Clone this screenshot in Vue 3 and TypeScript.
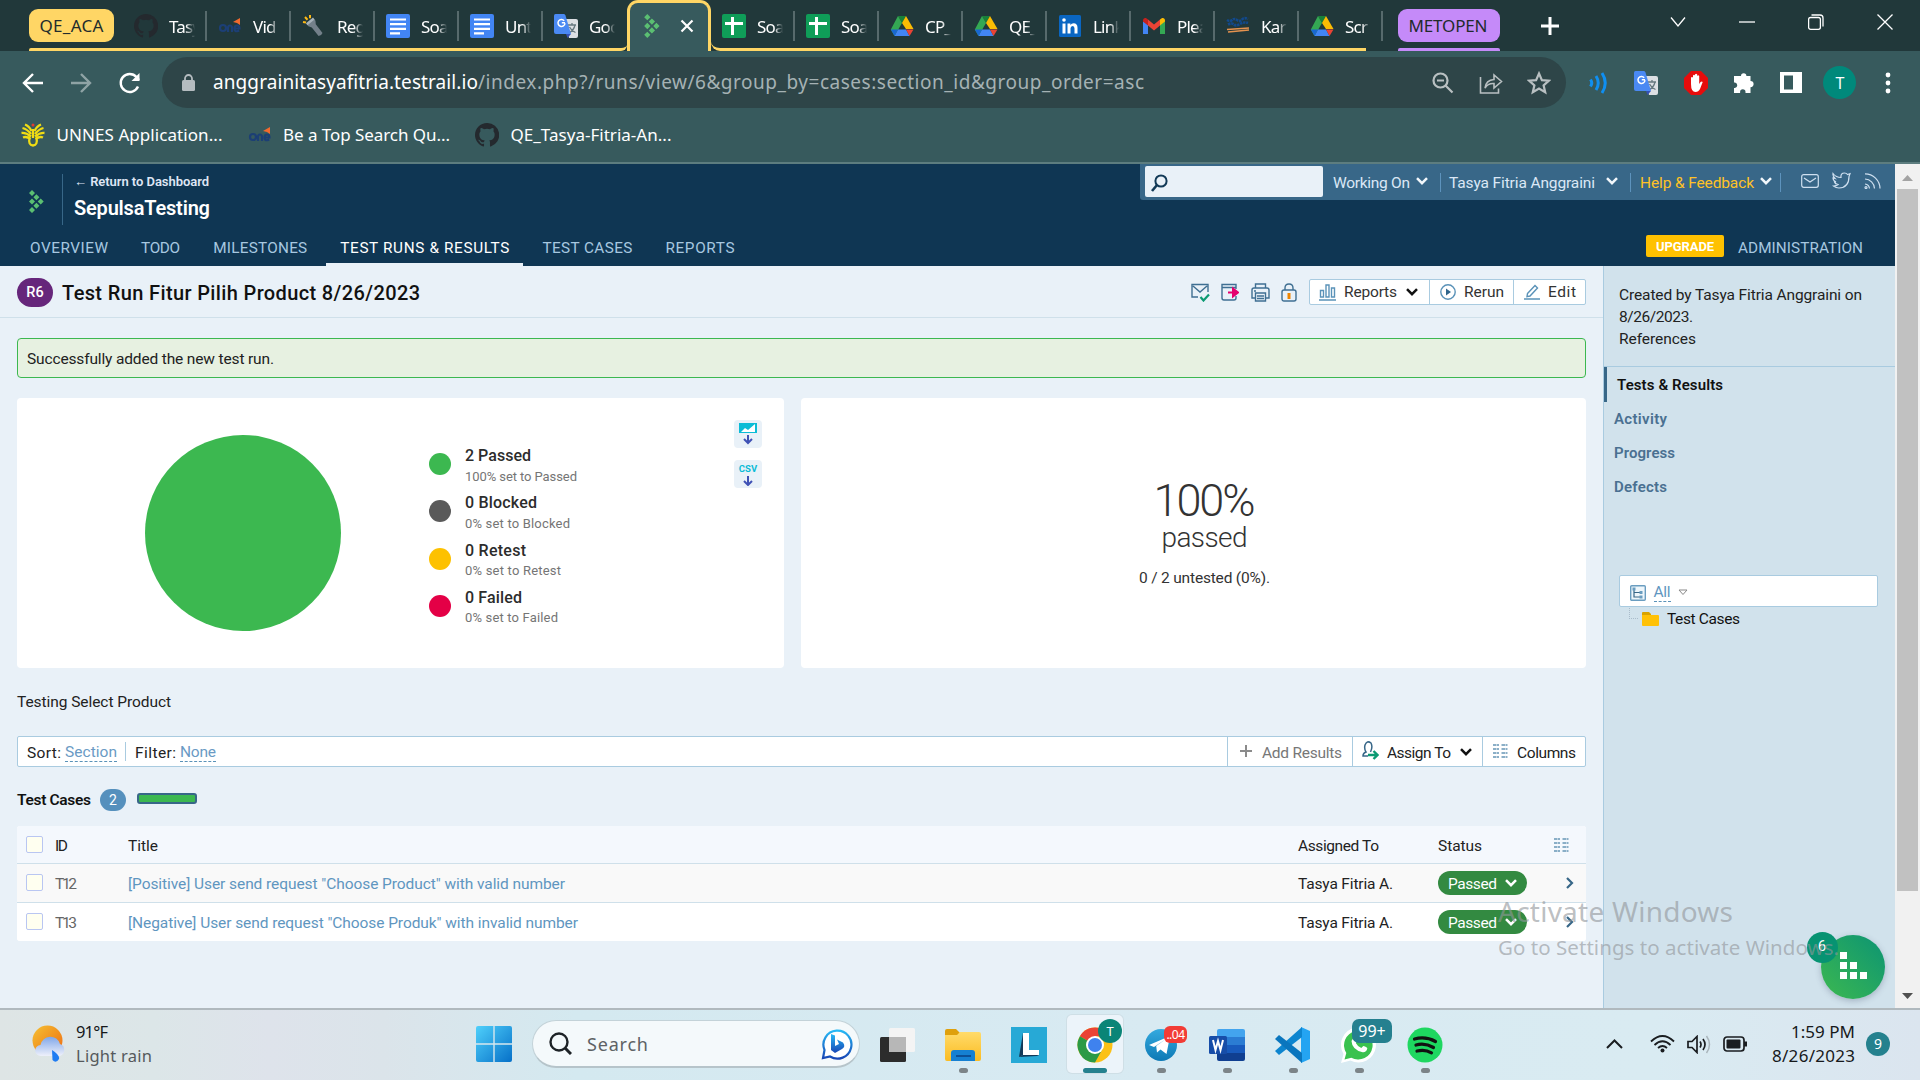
<script setup lang="ts">
import type { Directive } from 'vue'

interface Tab { icon: string; label: string }
interface LegendItem { color: string; title: string; titleWidth: number; sub: string; subWidth: number }
interface TestRow { id: string; title: string; width: number }
interface NavItem { label: string; width: number; active?: boolean }
interface TaskApp { icon: string; running: boolean; active?: boolean }

/* Tracks a label out (or in) so that it fills the given width. */
const vFit: Directive<HTMLElement, number> = {
  mounted(el, { value }) {
    el.style.display = 'inline-block'
    el.style.whiteSpace = 'nowrap'
    const range = document.createRange()
    range.selectNodeContents(el)
    const natural = range.getBoundingClientRect().width
    const count = Math.max((el.textContent ?? '').length - 1, 1)
    el.style.letterSpacing = `${(value - natural) / count}px`
    el.style.width = `${value}px`
  },
}

const tabsBefore: Tab[] = [
  { icon: 'github', label: 'Tasy' },
  { icon: 'one', label: 'Vid' },
  { icon: 'torch', label: 'Reg' },
  { icon: 'docs', label: 'Soa' },
  { icon: 'docs', label: 'Unt' },
  { icon: 'translate', label: 'Goo' },
]
const tabsAfter: Tab[] = [
  { icon: 'sheets', label: 'Soa' },
  { icon: 'sheets', label: 'Soa' },
  { icon: 'drive', label: 'CP_' },
  { icon: 'drive', label: 'QE_' },
  { icon: 'linkedin', label: 'Link' },
  { icon: 'gmail', label: 'Plea' },
  { icon: 'kampus', label: 'Kar' },
  { icon: 'drive', label: 'Scr' },
]
const nav: NavItem[] = [
  { label: 'OVERVIEW', width: 78 },
  { label: 'TODO', width: 39 },
  { label: 'MILESTONES', width: 94 },
  { label: 'TEST RUNS & RESULTS', width: 169, active: true },
  { label: 'TEST CASES', width: 90 },
  { label: 'REPORTS', width: 69 },
]
const legend: LegendItem[] = [
  { color: '#3cb850', title: '2 Passed', titleWidth: 66, sub: '100% set to Passed', subWidth: 112 },
  { color: '#5a5a5a', title: '0 Blocked', titleWidth: 72, sub: '0% set to Blocked', subWidth: 105 },
  { color: '#fdc100', title: '0 Retest', titleWidth: 61, sub: '0% set to Retest', subWidth: 96 },
  { color: '#e40046', title: '0 Failed', titleWidth: 57, sub: '0% set to Failed', subWidth: 93 },
]
const rows: TestRow[] = [
  { id: 'T12', title: '[Positive] User send request "Choose Product" with valid number', width: 437 },
  { id: 'T13', title: '[Negative] User send request "Choose Produk" with invalid number', width: 450 },
]
const apps: TaskApp[] = [
  { icon: 'taskview', running: false },
  { icon: 'explorer', running: true },
  { icon: 'lapp', running: false },
  { icon: 'chrome', running: true, active: true },
  { icon: 'telegram', running: true },
  { icon: 'word', running: true },
  { icon: 'vscode', running: true },
  { icon: 'whatsapp', running: true },
  { icon: 'spotify', running: true },
]
</script>

<template>
  <div class="screen">
    <svg class="defs" aria-hidden="true">
      <defs>
        <linearGradient id="g-win" x1="0" y1="0" x2="1" y2="1"><stop offset="0" stop-color="#4fd0fb" /><stop offset="1" stop-color="#0670c8" /></linearGradient>
        <linearGradient id="g-sun" x1="0" y1="0" x2="1" y2="1"><stop offset="0" stop-color="#f5c132" /><stop offset="1" stop-color="#ee6a12" /></linearGradient>
        <linearGradient id="g-cloud" x1="0" y1="0" x2="0" y2="1"><stop offset="0" stop-color="#7fa6e8" /><stop offset="1" stop-color="#eef0fb" /></linearGradient>
        <linearGradient id="g-fold" x1="0" y1="0" x2="0" y2="1"><stop offset="0" stop-color="#ffdb6b" /><stop offset="1" stop-color="#fbbc22" /></linearGradient>
        <linearGradient id="g-tg" x1="0" y1="0" x2="0" y2="1"><stop offset="0" stop-color="#34aadf" /><stop offset="1" stop-color="#0d79b5" /></linearGradient>
        <linearGradient id="g-bing" x1="0" y1="0" x2="0" y2="1"><stop offset="0" stop-color="#28b9f5" /><stop offset="1" stop-color="#1746b5" /></linearGradient>
      </defs>
      <symbol id="i-github" viewBox="0 0 16 16"><path fill="#24292e" d="M8 0C3.58 0 0 3.58 0 8c0 3.54 2.29 6.53 5.47 7.59.4.07.55-.17.55-.38v-1.33c-2.23.48-2.7-1.07-2.7-1.07-.36-.93-.89-1.18-.89-1.18-.73-.5.05-.49.05-.49.8.06 1.23.83 1.23.83.71 1.23 1.87.87 2.33.67.07-.52.28-.87.5-1.07-1.77-.2-3.64-.89-3.64-3.95 0-.87.31-1.59.82-2.15-.08-.2-.36-1.02.08-2.12 0 0 .67-.21 2.2.82a7.6 7.6 0 0 1 4 0c1.53-1.04 2.2-.82 2.2-.82.44 1.1.16 1.92.08 2.12.51.56.82 1.27.82 2.15 0 3.07-1.87 3.75-3.65 3.95.29.25.54.73.54 1.48v2.2c0 .21.15.46.55.38A8 8 0 0 0 8 0z" /></symbol>
      <symbol id="i-one" viewBox="0 0 24 24"><g fill="none" stroke="#1c3f75" stroke-width="2.2"><circle cx="5" cy="14" r="3" /><path d="M10 18v-4q0-2.500 2-2.500t2 2.500v4M16.500 14.500h5q0-3-2.500-3t-2.500 3 2.700 2.700l2-.6" /></g><path d="M15 8l7-4v7l-3-2z" fill="#f26a2e" /></symbol>
      <symbol id="i-torch" viewBox="0 0 24 24"><g transform="rotate(-38 12 13)"><path d="M8 6h9v3l-2 3v11q-2.500 1.500-5 0V12L8 9z" fill="#73808a" /><rect x="8" y="5" width="9" height="2.500" fill="#a5b1ba" /></g><path d="M1 8l3 .6M3 3l2.500 2.700M8 1v3.200" stroke="#fdb913" stroke-width="2" /></symbol>
      <symbol id="i-docs" viewBox="0 0 24 24"><rect width="24" height="24" rx="2" fill="#4285f4" /><path d="M4 5.500h16M4 10.200h16M4 14.900h16M4 19.300h10" stroke="#fff" stroke-width="2.200" /></symbol>
      <symbol id="i-sheets" viewBox="0 0 24 24"><rect width="24" height="24" rx="2" fill="#0f9d58" /><path d="M3 9.500h18M10.500 3v18" stroke="#fff" stroke-width="3" /></symbol>
      <symbol id="i-translate" viewBox="0 0 24 24"><path d="M10 5h12q2 0 2 2v15q0 2-2 2h-7z" fill="#dcdfe3" /><path d="M14 11h8M18 9v2M21 11q-1 5-6 8M15.500 13q2 4 6 5.500" stroke="#66787f" stroke-width="1.300" fill="none" /><path d="M1.500 0H10q1 0 1.500 1.500L17 20H2q-2 0-2-2V1.500Q0 0 1.500 0z" fill="#4a89f3" /><path d="M12 20h5l-3.500 4z" fill="#3551b5" /><path d="M11 8.800H7.800M10.200 6.700a3.500 3.500 0 1 0 .8 2.500" stroke="#fff" stroke-width="1.500" fill="none" /></symbol>
      <symbol id="i-rail" viewBox="0 0 15 23"><g fill="#5bbf72"><path d="M3 0l3 3-3 3-3-3zM7.400 4.300l3 3-3 3-3-3zM3 8.500l3 3-3 3-3-3zM11.700 8.500l3 3-3 3-3-3zM7.400 12.700l3 3-3 3-3-3zM3 17l3 3-3 3-3-3z" /></g></symbol>
      <symbol id="i-drive" viewBox="0 0 24 24"><path d="M8 2h8l-4 7z" fill="#188038" /><path d="M8 2l4 7-7.500 13L.8 15.500z" fill="#34a853" /><path d="M16 2l7.500 13H16L12 9z" fill="#fbbc04" /><path d="M8 15.500h8L19.500 22h-15z" fill="#4285f4" /><path d="M4.500 22L8 15.500H.8z" fill="#1967d2" /><path d="M19.500 22L16 15.500h7.500z" fill="#ea4335" /></symbol>
      <symbol id="i-linkedin" viewBox="0 0 24 24"><rect x="1" y="1" width="22" height="22" rx="1.500" fill="#0a66c2" /><path d="M4.500 9.500h3v10h-3zM9.500 9.500h2.900v1.400q1-1.700 3.200-1.700 3.900 0 3.900 4.600v5.700h-3v-5q0-2.600-1.800-2.600-2.200 0-2.200 2.600v5h-3z" fill="#fff" /><circle cx="6" cy="6" r="1.800" fill="#fff" /></symbol>
      <symbol id="i-gmail" viewBox="0 0 24 24"><path d="M1 7v13h5v-9z" fill="#4285f4" /><path d="M18 11v9h5V7z" fill="#34a853" /><path d="M6 5.500l6 5 6-5v6l-6 5-6-5z" fill="#ea4335" /><path d="M1 6.500C1 3.500 4 3 6 5.500v6L1 7.600z" fill="#c5221f" /><path d="M23 6.500C23 3.500 20 3 18 5.500v6l5-3.900z" fill="#fbbc04" /></symbol>
      <symbol id="i-kampus" viewBox="0 0 24 24"><path d="M1 6q3 2 5 0t5 0 5-.5 6-.5M2 10.500q4-2 6 0t6-.5 8-1" stroke="#12498c" stroke-width="2.600" stroke-dasharray="2.500 .7" fill="none" /><path d="M1 15.500l22-1.500M2 18l21-2" stroke="#e4924f" stroke-width="1.500" /></symbol>
      <symbol id="i-unnes" viewBox="0 0 24 24"><g fill="none" stroke="#f0dc14" stroke-width="2.300"><path d="M10.500 8Q8 3 4 1.500M10 11Q6 6 1.500 5M10 13.500Q5 9.500 .5 10M9.500 16q-4-3-7.500-1.500M13.500 8Q16 3 20 1.500M14 11q4-5 8.500-6M14 13.500q5-4 9.500-3.500M14.500 16q4-3 7.500-1.500" /><path d="M12 6v9M8.500 15q-1.500 7 3.500 7.500Q17 22 15.500 15" /></g><circle cx="12" cy="2" r="1.500" fill="#e63b2e" /></symbol>
      <symbol id="i-down" viewBox="0 0 12 8"><path d="M1 1.200l5 5 5-5" fill="none" stroke="currentColor" stroke-width="2.500" /></symbol>
      <symbol id="i-cols" viewBox="0 0 15 14"><path d="M0 1h6M0 5h6M0 9h6M0 13h6M8.500 1h6M8.500 5h6M8.500 9h6M8.500 13h6" stroke="#6595b5" stroke-width="1.600" stroke-dasharray="3.500 .5" /></symbol>

      <symbol id="i-taskview" viewBox="0 0 36 36"><rect x="1" y="10" width="26" height="25" rx="1.500" fill="#2c2c2c" /><rect x="10" y="1" width="26" height="24" rx="1.500" fill="#f4f4f4" /><rect x="10" y="10" width="17" height="15" fill="#b7b7b7" /></symbol>
      <symbol id="i-explorer" viewBox="0 0 36 36"><path d="M0 4q0-2 2-2h9l4 4v8H0z" fill="#dfa00c" /><path d="M0 8h12l3-3h19q2 0 2 2v25q0 2-2 2H2q-2 0-2-2z" fill="url(#g-fold)" /><path d="M6 34V26q0-3 3-3h18q3 0 3 3v8z" fill="#1580d2" /><path d="M11 29h15" stroke="#0c4f96" stroke-width="2" /></symbol>
      <symbol id="i-lapp" viewBox="0 0 36 36"><path d="M0 0h36v36H0z" fill="#27a9d6" /><path d="M12 6L8 30l4-2z" fill="#123a59" /><path d="M12 6h6v17h10v5H12z" fill="#fff" /><path d="M8 30l4-2h16l-2 1z" fill="#123a59" /></symbol>
      <symbol id="i-chrome" viewBox="0 0 36 36"><circle cx="18" cy="18" r="17.500" fill="#fbc116" /><path d="M18 18L2.900 9.200A17.500 17.500 0 0 1 33.200 9.300H18z" fill="#ea4335" /><path d="M2.900 9.200A17.500 17.500 0 0 0 18 35.500L25.500 22 18 18z" fill="#2b9a46" /><circle cx="18" cy="18" r="9" fill="#fff" /><circle cx="18" cy="18" r="7" fill="#3f82ee" /></symbol>
      <symbol id="i-telegram" viewBox="0 0 36 36"><circle cx="18" cy="18" r="16" fill="url(#g-tg)" /><path d="M6 18L27 9l-3.500 18-6-4.500-3.500 3-.8-6.500L23 12l-12 8z" fill="#fff" /></symbol>
      <symbol id="i-word" viewBox="0 0 36 36"><path d="M8 4q0-2 2-2h24q2 0 2 2v7H8z" fill="#43a4ee" /><path d="M8 10h28v9H8z" fill="#2b7cd3" /><path d="M8 18h28v9H8z" fill="#185abd" /><path d="M8 26h28v6q0 2-2 2H10q-2 0-2-2z" fill="#103f91" /><rect x="0" y="9" width="18" height="18" rx="1.500" fill="#174da8" /><path d="M4 13l2.500 10L9 14l2.500 9L14 13" fill="none" stroke="#fff" stroke-width="2" /></symbol>
      <symbol id="i-vscode" viewBox="0 0 36 36"><path d="M26 0l9 4v28l-9 4z" fill="#24a4f2" /><path d="M27 0v10L4 28l-4-4z" fill="#0d85cf" /><path d="M0 12l4-4 23 18v10z" fill="#0a76be" /></symbol>
      <symbol id="i-whatsapp" viewBox="0 0 36 36"><path d="M0 36l2.500-9A17.500 17.500 0 1 1 9.500 33.500z" fill="#fff" /><path d="M3.500 32.500l1.800-6.500a14.300 14.300 0 1 1 5 4.700z" fill="#3ac24f" /><path d="M12.500 10.500q2-1.500 3 1l.8 2.200-1.500 2.300q1.800 3.500 5.500 5l2-2q4 1 4 2.500-1 4-4.600 3.700Q11 23 10.500 14z" fill="#fff" /></symbol>
      <symbol id="i-spotify" viewBox="0 0 36 36"><circle cx="18" cy="18" r="17.500" fill="#1ed760" /><path d="M7.500 12q11-3 21 2.500M9 18q9-2.500 17.500 2.500M10 24q8-2 14.500 1.800" stroke="#111" stroke-width="3.200" stroke-linecap="round" fill="none" /></symbol>
    </svg>

    <!-- Browser tab strip -->
    <div class="tabstrip">
      <div class="group yellow"><span v-fit="64">QE_ACA</span></div>
      <div class="tabs tabs-before">
        <div v-for="(t, i) in tabsBefore" :key="i" class="tab" :class="{ last: i === tabsBefore.length - 1 }">
          <svg class="fav"><use :href="'#i-' + t.icon" /></svg><span class="tab-label">{{ t.label }}</span>
        </div>
      </div>
      <div class="tab-active">
        <svg width="16" height="24"><use href="#i-rail" /></svg>
        <svg width="14" height="14" viewBox="0 0 14 14"><path d="M1.500 1.500l11 11m0-11l-11 11" stroke="#fff" stroke-width="2.200" /></svg>
      </div>
      <div class="tabs tabs-after">
        <div v-for="(t, i) in tabsAfter" :key="i" class="tab">
          <svg class="fav"><use :href="'#i-' + t.icon" /></svg><span class="tab-label">{{ t.label }}</span>
        </div>
      </div>
      <div class="group purple"><span v-fit="79">METOPEN</span></div>
      <svg class="newtab" width="18" height="18" viewBox="0 0 18 18"><path d="M9 0v18M0 9h18" stroke="#fff" stroke-width="3" /></svg>
      <div class="winctl">
        <svg width="16" height="16" viewBox="0 0 16 16"><path d="M1 3.500l7 8.500 7-8.500" /></svg>
        <svg width="16" height="16" viewBox="0 0 16 16"><path d="M0 8h16" /></svg>
        <svg width="16" height="16" viewBox="0 0 16 16"><rect x=".6" y="3.500" width="11.800" height="11.800" rx="2" /><path d="M3.500 1H12q3 0 3 3v8.500" /></svg>
        <svg width="16" height="16" viewBox="0 0 16 16"><path d="M.5.500l15 15m0-15l-15 15" /></svg>
      </div>
    </div>

    <!-- Address bar -->
    <div class="addressbar">
      <svg width="22" height="22" viewBox="0 0 22 22" class="w"><path d="M21 11H2M11 2l-9 9 9 9" /></svg>
      <svg width="22" height="22" viewBox="0 0 22 22" class="w dim"><path d="M1 11h19M11 2l9 9-9 9" /></svg>
      <svg width="24" height="24" viewBox="0 0 24 24" class="w"><path d="M20 15.500A9 9 0 1 1 18.500 6L21 9" /><path d="M21.500 2v8h-8z" fill="#fff" stroke="none" /></svg>
      <div class="omnibox">
        <svg width="13" height="17" viewBox="0 0 13 17"><rect y="6" width="13" height="11" rx="1.500" fill="#b5bcc0" /><path d="M3 7V4.500a3.500 3.500 0 0 1 7 0V7" fill="none" stroke="#b5bcc0" stroke-width="1.800" /></svg>
        <span v-fit="265" class="domain">anggrainitasyafitria.testrail.io</span><span v-fit="666" class="path">/index.php?/runs/view/6&amp;group_by=cases:section_id&amp;group_order=asc</span>
        <div class="omni-icons">
          <svg width="22" height="22" viewBox="0 0 22 22"><circle cx="8.500" cy="8.500" r="7" /><path d="M5 8.500h7M13.500 13.500l7 7" /></svg>
          <svg width="24" height="24" viewBox="0 0 24 24"><path d="M1.500 6v16h18v-4.500M6 17q1-8 9-8.500V4l7.500 6.500L15 17v-4.500q-6-.5-9 4.500z" stroke-width="1.600" /></svg>
          <svg width="24" height="24" viewBox="0 0 24 24"><path d="M12 2.500l2.900 6.600 7 .6-5.300 4.600 1.600 6.900L12 17.500l-6.200 3.700 1.600-6.900-5.300-4.600 7-.6z" /></svg>
        </div>
      </div>
      <div class="exts">
        <svg width="20" height="22" viewBox="0 0 20 22"><path d="M1.500 7.500q2.500 3.500 0 7M7 4q4.500 7 0 14M13 1q6.500 10 0 20" fill="none" stroke="#0f8ff2" stroke-width="3" /></svg>
        <svg width="24" height="24"><use href="#i-translate" /></svg>
        <svg width="24" height="24" viewBox="0 0 24 24"><path d="M7 0h10l7 7v10l-7 7H7l-7-7V7z" fill="#e60c0c" /><path d="M7 13V6.500q1-1.200 2 0V11V4.500q1-1.400 2 0V11V3.500q1.200-1.400 2.200 0V11V5q1-1.400 2 0v8q2-3.500 3.500-2L16 18q-1.500 3-4.500 3Q7 21 7 13z" fill="#fff" /></svg>
        <svg width="22" height="22" viewBox="0 0 22 22"><path d="M8 4a2.700 2.700 0 0 1 5.400 0h4.100v5a3 3 0 1 1 0 6.200V21h-5v-1a2.700 2.700 0 0 0-5.400 0v1H1v-5h1a2.800 2.800 0 0 0 0-5.500H1V4z" fill="#fff" /></svg>
        <svg width="22" height="21" viewBox="0 0 22 21"><path d="M0 0h22v21H0zM4 3.500v14h9v-14z" fill="#fff" fill-rule="evenodd" /></svg>
        <div class="avatar">T</div>
        <svg width="6" height="22" viewBox="0 0 6 22"><g fill="#fff"><circle cx="3" cy="3" r="2.400" /><circle cx="3" cy="11" r="2.400" /><circle cx="3" cy="19" r="2.400" /></g></svg>
      </div>
    </div>

    <div class="bookmarks">
      <svg class="fav"><use href="#i-unnes" /></svg><span v-fit="166">UNNES Application...</span>
      <svg class="fav"><use href="#i-one" /></svg><span v-fit="167">Be a Top Search Qu...</span>
      <svg class="fav"><use href="#i-github" /></svg><span v-fit="161">QE_Tasya-Fitria-An...</span>
    </div>

    <!-- Page viewport -->
    <div class="viewport">
      <div class="page">
        <header class="apphead">
          <div class="brandrow">
            <svg class="logo" width="15" height="23"><use href="#i-rail" /></svg>
            <div class="brand">
              <span v-fit="135" class="return">← Return to Dashboard</span>
              <span v-fit="136" class="project">SepulsaTesting</span>
            </div>
            <div class="topbar">
              <div class="search"><svg width="17" height="18" viewBox="0 0 17 18"><circle cx="10" cy="7" r="5.600" fill="none" stroke="#123a57" stroke-width="2" /><path d="M6 11l-5 6" stroke="#123a57" stroke-width="2.600" /></svg></div>
              <span v-fit="77">Working On</span><svg class="chev"><use href="#i-down" /></svg>
              <i class="bar b1"></i>
              <span v-fit="146">Tasya Fitria Anggraini</span><svg class="chev c2"><use href="#i-down" /></svg>
              <i class="bar b2"></i>
              <span v-fit="114" class="help">Help &amp; Feedback</span><svg class="chev"><use href="#i-down" /></svg>
              <i class="bar b3"></i>
              <div class="social">
                <svg width="18" height="14" viewBox="0 0 18 14"><rect x=".7" y=".7" width="16.600" height="12.600" rx="2" /><path d="M3 4l6 4 6-4" /></svg>
                <svg width="19" height="17" viewBox="0 0 19 17"><path d="M1 1.500q3 4 8 4Q8.500 1 12.500 1q2 0 3 1.500L18 1.700 17 4.500q0 11-10 11.500-3 0-5.500-2 3 0 4.500-1.500-3-.5-3.500-2.500h1.500Q1 8.500 1 6l2 .5Q.5 4 1 1.500z" /></svg>
                <svg width="17" height="16" viewBox="0 0 17 16"><path d="M1 .8a15 15 0 0 1 15 14.700M1 6a10 10 0 0 1 9.500 9.500M1 11q4 .5 4.500 4.500" /><circle cx="2" cy="14.500" r="1" /></svg>
              </div>
            </div>
          </div>
          <nav class="nav">
            <a v-for="n in nav" :key="n.label" :class="{ active: n.active }"><span v-fit="n.width">{{ n.label }}</span></a>
            <div class="navright"><span class="upgrade"><b v-fit="58">UPGRADE</b></span><span v-fit="125">ADMINISTRATION</span></div>
          </nav>
        </header>

        <div class="body">
          <main class="main">
            <div class="titlebar">
              <span class="runid">R6</span>
              <h1 v-fit="358">Test Run Fitur Pilih Product 8/26/2023</h1>
              <div class="tools">
                <svg width="19" height="19" viewBox="0 0 19 19"><path d="M7 14H1V1.500h16V9M2 3l7 6 7-6" /><path d="M9.500 14l3 3.500 5.500-6" stroke="#0b9a72" stroke-width="2.200" /></svg>
                <svg width="18" height="18" viewBox="0 0 18 18"><path d="M15 6V1.500H1V15q0 2 2 2h10q2 0 2-2v-2M1 4.500h14" /><path d="M7 9.500h8m-3-4l5 4-5 4z" stroke="#e5006d" fill="#e5006d" stroke-width="2" /></svg>
                <svg width="19" height="19" viewBox="0 0 19 19"><path d="M4.500 5V1h10v4M4 15H1V7q0-2 2-2h13q2 0 2 2v8h-3M4.500 10h10v8h-10zM6 13h7M6 15.500h7M3 8h2" /></svg>
                <svg width="17" height="19" viewBox="0 0 17 19"><rect x="1" y="7" width="14" height="11" rx="2" /><path d="M4 7V5q0-4 4-4t4 4v2" /><path d="M8 10v6" stroke="#ee8500" stroke-width="3" /></svg>
              </div>
              <div class="btns">
                <span class="btn reports"><svg width="17" height="17" viewBox="0 0 17 17"><path d="M1.500 6.500h3V13h-3zM7 1h3v12H7zM12.500 4h3v9h-3zM0 16h17" /></svg><span v-fit="53">Reports</span><svg class="chev"><use href="#i-down" /></svg></span>
                <span class="btn rerun"><svg width="16" height="16" viewBox="0 0 16 16"><circle cx="8" cy="8" r="7.200" /><path d="M6 4.500v7l5-3.500z" fill="#2f658c" stroke="none" /></svg><span v-fit="40">Rerun</span></span>
                <span class="btn edit"><svg width="16" height="16" viewBox="0 0 16 16"><path d="M3.500 9.500L11 1.500l2.500 2.500-7.500 8-3 .7zM0 15h16" /></svg><span v-fit="28">Edit</span></span>
              </div>
            </div>

            <div class="alert"><span v-fit="247">Successfully added the new test run.</span></div>

            <div class="cards">
              <section class="card chartcard">
                <svg class="pie" viewBox="0 0 196 196"><circle cx="98" cy="98" r="98" fill="#3cb850" /></svg>
                <ul class="legend">
                  <li v-for="l in legend" :key="l.title">
                    <i class="dot" :style="{ background: l.color }"></i>
                    <div><b v-fit="l.titleWidth">{{ l.title }}</b><small v-fit="l.subWidth">{{ l.sub }}</small></div>
                  </li>
                </ul>
                <div class="dl">
                  <span><svg width="18" height="22" viewBox="0 0 18 22"><path d="M0 0h18v10H0z" fill="#0bbcd6" /><path d="M2 9l4-4 3 2 7-6v8z" fill="#fff" /><path d="M9 12v8M5 16l4 4 4-4" fill="none" stroke="#3f51b5" stroke-width="2" /></svg></span>
                  <span><em>CSV</em><svg width="10" height="10" viewBox="4 11 10 10"><path d="M9 11v9M5 16l4 4 4-4" fill="none" stroke="#3f51b5" stroke-width="2" /></svg></span>
                </div>
              </section>
              <section class="card percent">
                <span v-fit="102" class="big">100%</span>
                <span v-fit="86" class="mid">passed</span>
                <span v-fit="131" class="small">0 / 2 untested (0%).</span>
              </section>
            </div>

            <p class="desc"><span v-fit="154">Testing Select Product</span></p>

            <div class="filterbar">
              <span v-fit="34">Sort:</span><a v-fit="52">Section</a><i class="vline"></i><span v-fit="41">Filter:</span><a v-fit="36">None</a>
              <div class="fbtns">
                <span class="fb add"><svg width="12" height="12" viewBox="0 0 12 12"><path d="M6 0v12M0 6h12" stroke="#8b8b8b" stroke-width="2" /></svg><span v-fit="80">Add Results</span></span>
                <span class="fb assign"><svg width="17" height="19" viewBox="0 0 17 19"><path d="M6 15H1q0-3 3-4-2-3-1-7 2-5 6-2 2 4-.5 9" fill="none" stroke="#386788" stroke-width="1.500" /><path d="M6 14h9M11.500 10l4 4-4 4" fill="none" stroke="#0b9a72" stroke-width="2.400" /></svg><span v-fit="64">Assign To</span><svg class="chev"><use href="#i-down" /></svg></span>
                <span class="fb columns"><svg width="15" height="14"><use href="#i-cols" /></svg><span v-fit="59">Columns</span></span>
              </div>
            </div>

            <div class="section"><b v-fit="74">Test Cases</b><span class="count">2</span><i class="progress"></i></div>

            <div class="table">
              <div class="tr th">
                <i class="cb"></i><span class="c-id"><span v-fit="13">ID</span></span><span class="c-title"><span v-fit="30">Title</span></span>
                <span class="c-as"><span v-fit="81">Assigned To</span></span><span class="c-st"><span v-fit="44">Status</span></span><svg width="15" height="14"><use href="#i-cols" /></svg>
              </div>
              <div v-for="r in rows" :key="r.id" class="tr">
                <i class="cb"></i><span class="c-id gray"><span v-fit="22">{{ r.id }}</span></span><a class="c-title"><span v-fit="r.width">{{ r.title }}</span></a>
                <span class="c-as"><span v-fit="95">Tasya Fitria A.</span></span>
                <span class="c-st"><span class="pill"><span v-fit="49">Passed</span><svg class="chev"><use href="#i-down" /></svg></span></span>
                <svg class="go" width="8" height="12" viewBox="0 0 8 12"><path d="M1 1l5 5-5 5" fill="none" stroke="#386788" stroke-width="2.200" /></svg>
              </div>
            </div>
          </main>

          <aside class="side">
            <div class="created"><span v-fit="243">Created by Tasya Fitria Anggraini on</span><span v-fit="74">8/26/2023.</span><span v-fit="77">References</span></div>
            <a class="cur"><span v-fit="106">Tests &amp; Results</span></a>
            <a><span v-fit="53">Activity</span></a>
            <a><span v-fit="61">Progress</span></a>
            <a><span v-fit="53">Defects</span></a>
            <div class="select">
              <svg width="16" height="16" viewBox="0 0 16 16"><rect x=".7" y=".7" width="14.600" height="14.600" rx="1" fill="#eef6fb" stroke="#6a9dc0" stroke-width="1.400" /><path d="M4 4v8h6M4 7.500h6" stroke="#386788" fill="none" stroke-width="1.200" /><path d="M2.500 2.500h3v3h-3zM9.500 6h3v3h-3zM9.500 10.500h3v3h-3z" fill="#6a9dc0" /></svg>
              <u v-fit="17">All</u>
              <svg width="10" height="7" viewBox="0 0 10 7"><path d="M1 1h8L5 5.500z" fill="none" stroke="#888" /></svg>
            </div>
            <div class="tree"><i class="elbow"></i><svg width="17" height="14" viewBox="0 0 17 14"><path d="M0 1q0-1 1-1h6l2 2v3H0z" fill="#d9a300" /><path d="M0 3h16q1 0 1 1v9q0 1-1 1H1q-1 0-1-1z" fill="#ffc107" /></svg><span v-fit="73">Test Cases</span></div>
          </aside>
        </div>

        <div class="bubble">
          <svg width="29" height="29" viewBox="0 0 29 29"><path d="M1 1h7v7H1zM1 11h7v7H1zM11 11h7v7h-7zM1 21h7v7H1zM11 21h7v7h-7zM21 21h7v7h-7z" fill="#fff" /></svg>
          <span class="bub-count">6</span>
        </div>
      </div>
      <div class="scrollbar">
        <svg width="25" height="25" viewBox="0 0 25 25"><path d="M7 17h11l-5.500-6z" fill="#a3a3a3" /></svg>
        <div class="thumb"></div>
        <svg class="dn" width="25" height="25" viewBox="0 0 25 25"><path d="M7 10h11l-5.500 6z" fill="#505050" /></svg>
      </div>
      <div class="watermark"><span v-fit="235" class="wm1">Activate Windows</span><span v-fit="341" class="wm2">Go to Settings to activate Windows.</span></div>
    </div>

    <!-- Taskbar -->
    <footer class="taskbar">
      <svg class="weather" width="34" height="38" viewBox="0 0 34 38"><circle cx="15.500" cy="15.500" r="15" fill="url(#g-sun)" /><path d="M9 31a5.500 5.500 0 0 1-.5-11 10 10 0 0 1 19.500-1 6.200 6.200 0 0 1-1 12z" fill="url(#g-cloud)" /><path d="M20 25q8 5 7 9-3 5-6.500 1z" fill="#1f7cf2" /></svg>
      <div class="wtext"><span v-fit="32">91°F</span><span v-fit="76" class="muted">Light rain</span></div>
      <svg width="36" height="36" viewBox="0 0 36 36"><path d="M2 0h15.300v17.300H0V2q0-2 2-2zM18.700 0H34q2 0 2 2v15.300H18.700zM0 18.700h17.300V36H2q-2 0-2-2zM18.700 18.700H36V34q0 2-2 2H18.700z" fill="url(#g-win)" /></svg>
      <div class="tsearch">
        <svg width="23" height="23" viewBox="0 0 23 23"><circle cx="10" cy="10" r="8.500" fill="none" stroke="#1d2226" stroke-width="2.400" /><path d="M16 16l6 6" stroke="#1d2226" stroke-width="3" /></svg>
        <span v-fit="61">Search</span>
        <svg class="bing" width="32" height="32" viewBox="0 0 32 32"><path d="M2 30l1.500-8A14 14 0 1 1 9 28.500z" fill="#fff" stroke="url(#g-bing)" stroke-width="2.200" /><path d="M10 6l4 1.500v10.500l4-2-2-4.500 6 3q3 4-1 6.500l-7 4-4-3z" fill="url(#g-bing)" /></svg>
      </div>
      <div class="apps">
        <div v-for="a in apps" :key="a.icon" class="app" :class="{ active: a.active }">
          <svg width="36" height="36"><use :href="'#i-' + a.icon" /></svg>
          <i v-if="a.running" class="run"></i>
          <span v-if="a.icon === 'chrome'" class="bdg bc">T</span>
          <span v-if="a.icon === 'telegram'" class="bdg bt">..04</span>
          <span v-if="a.icon === 'whatsapp'" class="bdg bw">99+</span>
        </div>
      </div>
      <div class="tray">
        <svg width="17" height="10" viewBox="0 0 17 10"><path d="M1 9l7.500-7.500L16 9" fill="none" stroke="#1a1d20" stroke-width="2" /></svg>
        <svg class="wifi" width="25" height="18" viewBox="0 0 25 18"><path d="M1 6.500q11.500-11 23 0M4.500 10q8-7.500 16 0M8 13q4.500-4 9 0" fill="none" stroke="#1a1d20" stroke-width="1.800" /><circle cx="12.500" cy="15.500" r="2" fill="#1a1d20" /></svg>
        <svg class="vol" width="25" height="19" viewBox="0 0 25 19"><path d="M1 6.500h4L10 1.500v16L5 12.500H1zM13 6.500q2 3 0 6M16 4q4 5.500 0 11" fill="none" stroke="#1a1d20" stroke-width="1.700" /><path d="M19.500 1q6 8.500 0 17" fill="none" stroke="#a9b5bb" stroke-width="1.500" /></svg>
        <svg class="bat" width="25" height="16" viewBox="0 0 25 16"><rect x="1" y="1" width="20" height="14" rx="3" fill="none" stroke="#1a1d20" stroke-width="1.700" /><rect x="3.500" y="3.500" width="14" height="9" rx="1" fill="#1a1d20" /><path d="M21 5.500h3v5h-3z" fill="#1a1d20" /></svg>
        <div class="clock"><span v-fit="64">1:59 PM</span><span v-fit="83">8/26/2023</span></div>
        <span class="notif">9</span>
      </div>
    </footer>
  </div>
</template>

<style>
body { margin: 0; overflow: hidden; }
</style>

<style scoped>
* { box-sizing: border-box; }
svg { display: block; flex: none; }
.screen { width: 1920px; height: 1080px; display: flex; flex-direction: column; overflow: hidden; font-family: 'Noto Sans', 'Open Sans', sans-serif; font-size: 17px; }
.screen span, .screen a, .screen b { flex: none; }
.defs { position: absolute; width: 0; height: 0; }
.fav { width: 24px; height: 24px; }

.tabstrip { height: 51px; flex: none; background: #21383a; display: flex; color: #fff; }
.group { margin-top: 9px; height: 33px; border-radius: 9px; display: flex; align-items: center; justify-content: center; color: #222b2c; position: relative; flex: none; }
.group span { margin-top: -1px; }
.group::after { content: ''; position: absolute; left: 0; right: 0; top: 39px; height: 3px; background: inherit; border-radius: 2px 2px 0 0; }
.yellow { margin-left: 29px; width: 85px; background: #ffd665; }
.yellow::after { width: 100px; right: auto; }
.purple { margin-left: 15px; width: 102px; background: #c58af9; }
.purple span { margin-left: -2px; }
.tabs { display: flex; border-bottom: 3px solid #ffd665; height: 51px; flex: none; }
.tabs-before { width: 513px; padding-left: 9px; border-bottom-right-radius: 6px; }
.tabs-after { width: 655px; margin-right: 17px; padding-left: 0; border-bottom-left-radius: 9px; }
.tab { width: 84px; flex: none; height: 30px; margin-top: 11px; padding-left: 11px; display: flex; align-items: center; border-right: 2px solid #576a6c; }
.tab.last { border-right-color: transparent; }
.tab-label { margin-left: 11px; width: 26px; overflow: hidden; white-space: nowrap; font-size: 17px; letter-spacing: -.8px; -webkit-mask-image: linear-gradient(90deg, #000 65%, transparent); mask-image: linear-gradient(90deg, #000 65%, transparent); }
.tab-active { width: 84px; height: 51px; flex: none; background: #375a5d; border: 3px solid #ffd665; border-bottom: 0; border-radius: 11px 11px 0 0; display: flex; align-items: center; padding: 0 0 2px 14px; gap: 20px; }
.newtab { margin: 17px 0 0 41px; }
.winctl { display: flex; margin: 14px 0 0 111px; gap: 53px; fill: none; stroke: #fff; stroke-width: 1.3; }

.addressbar { height: 63px; flex: none; background: #375a5d; display: flex; align-items: center; padding-left: 22px; }
.w { fill: none; stroke: #fff; stroke-width: 2.4; margin-right: 26px; }
.w.dim { stroke: #8fa3a5; }
.w:nth-child(3) { margin-right: 20px; }
.omnibox { width: 1404px; height: 51px; border-radius: 26px; background: #2e4548; display: flex; align-items: center; padding-left: 20px; font-size: 19px; }
.omnibox span { margin-top: -2px; }
.omnibox .domain { color: #fff; margin-left: 18px; }
.omnibox .path { color: #a5b2b4; }
.omni-icons { display: flex; align-items: center; margin-left: 288px; gap: 25px; fill: none; stroke: #b9c0c2; stroke-width: 2.2; }
.omni-icons > :last-child { margin-left: -1px; }
.exts { display: flex; align-items: center; margin-left: 23px; gap: 25.3px; }
.avatar { width: 33px; height: 33px; border-radius: 50%; background: #00897b; color: #fff; display: grid; place-items: center; margin: 0 2px 0 -4px; font-size: 16px; }
.exts > :last-child { margin-left: 1px; }
.bookmarks { height: 50px; flex: none; background: #375a5d; border-bottom: 2px solid #5d7d7f; display: flex; align-items: center; padding: 0 0 6px 21px; color: #fff; }
.bookmarks span { margin: -2px 25px 0 11.500px; }

.viewport { height: 844px; flex: none; display: flex; position: relative; font-family: Roboto, 'Liberation Sans', sans-serif; font-size: 15.5px; color: #222; }
.page { width: 1895px; display: flex; flex-direction: column; position: relative; }
.apphead { height: 102px; background: #0f3653; display: flex; flex-direction: column; flex: none; }
.brandrow { display: flex; height: 70px; }
.logo { margin: 26px 18px 0 29px; }
.brand { margin-top: 10px; height: 51px; border-left: 1px solid #386788; padding-left: 11px; display: flex; flex-direction: column; }
.return { font-size: 13px; font-weight: 600; color: #dfe6f5; line-height: 15px; }
.project { font-size: 20px; font-weight: 600; color: #fff; line-height: 24px; margin-top: 7px; }
.topbar { margin-left: auto; width: 755px; height: 36px; background: #386788; border-bottom-left-radius: 3px; display: flex; align-items: center; color: #dbe7f6; }
.topbar > span { margin-top: 1px; }
.search { width: 178px; height: 31px; margin: 0 10px 1px 5px; background: #e9f1f8; border-radius: 2px; padding: 8px 0 0 6px; }
.chev { width: 12px; height: 8px; margin-left: 6px; }
.topbar .chev { color: #f2f7fb; margin-top: -3px; }
.topbar .c2 { margin-left: 11px; }
.bar { width: 1px; height: 19px; background: #5d93bd; }
.b1 { margin: 0 8px 0 12px; }
.b2 { margin: 0 9px 0 12px; }
.b3 { margin-left: 8px; }
.help { color: #ffc226; }
.social { display: flex; align-items: center; gap: 13px; margin: -3px 0 0 20px; fill: none; stroke: #cfe0f0; stroke-width: 1.2; }
.nav { display: flex; height: 32px; color: #a7c8e0; font-size: 15.3px; line-height: 29px; padding-left: 16px; }
.nav a { padding: 0 14px; margin-right: 5.1px; height: 32px; }
.nav a.active { color: #fff; border-bottom: 3px solid #e9f1f8; }
.navright { margin-left: auto; margin-right: 32px; display: flex; }
.upgrade { height: 22px; width: 78px; margin: 1px 14px 0 0; background: #ffc100; border-radius: 2px; color: #fff; font-size: 13px; line-height: 24px; text-align: center; }

.body { display: flex; height: 742px; }
.main { width: 1603px; background: #e9f1f8; display: flex; flex-direction: column; }
.titlebar { height: 52px; flex: none; border-bottom: 1px solid #cfe0ea; display: flex; align-items: center; padding: 1px 0 0 17px; }
.runid { width: 36px; height: 29px; border-radius: 15px; background: #66267b; color: #fff; font-weight: 500; font-size: 14.5px; line-height: 29px; text-align: center; }
h1 { font-size: 20px; font-weight: 500; margin: 1px 0 0 9px; color: #111; }
.tools { display: flex; margin-left: auto; gap: 11.4px; fill: none; stroke: #3f6f92; stroke-width: 1.4; }
.btns { display: flex; margin: 0 17px 0 11px; height: 26px; background: #fff; border: 1px solid #a9cbe0; border-radius: 2px; width: 277px; }
.btn { display: flex; align-items: center; color: #333; }
.btn svg:first-child { fill: none; stroke: #5a92b8; stroke-width: 1.4; margin-right: 8px; }
.btn .chev { color: #111; margin-left: 9px; }
.reports { width: 119px; padding-left: 9px; }
.rerun { width: 84px; border-left: 1px solid #a9cbe0; padding-left: 10px; }
.edit { flex: 1; border-left: 1px solid #a9cbe0; padding-left: 10px; }
.alert { margin: 20px 17px 0; height: 40px; flex: none; border: 1px solid #3cb850; border-radius: 4px; background: #e7f1e1; padding: 2px 0 0 9px; display: flex; align-items: center; }
.cards { display: flex; margin: 20px 17px 0; gap: 17px; height: 270px; flex: none; }
.card { background: #fff; border-radius: 4px; display: flex; }
.chartcard { width: 767px; }
.pie { width: 196px; height: 196px; margin: 36.5px 0 0 128px; }
.legend { list-style: none; margin: 43px 0 0 88px; padding: 0; width: 160px; }
.legend li { display: flex; height: 47.3px; }
.dot { width: 22px; height: 22px; border-radius: 50%; margin: 12px 14px 0 0; flex: none; }
.legend div { display: flex; flex-direction: column; padding-top: 5px; }
.legend b { font-size: 16px; font-weight: 500; line-height: 20px; color: #2c2c2c; }
.legend small { font-size: 13px; line-height: 18px; margin-top: 1.5px; color: #757575; }
.dl { display: flex; flex-direction: column; gap: 12px; margin: 22px 22px 0 auto; }
.dl > span { width: 28px; height: 28px; border-radius: 4px; background: #e9f1f8; display: flex; flex-direction: column; align-items: center; justify-content: center; }
.dl em { font: bold 9.5px Roboto, sans-serif; color: #0bbcd6; margin-bottom: 2px; }
.percent { flex: 1; flex-direction: column; align-items: center; padding-top: 77px; padding-left: 22px; color: #333; }
.big { font-size: 45px; line-height: 46px; height: 46px; font-weight: 300; margin-top: 3px; }
.mid { font-size: 28px; line-height: 32px; margin-top: -2px; font-weight: 300; }
.small { margin-top: 15px; line-height: 18px; }
.desc { margin: 25px 17px 0; height: 19px; line-height: 19px; flex: none; }
.filterbar { margin: 24px 17px 0; height: 31px; flex: none; background: #fff; border: 1px solid #a9cbe0; border-radius: 2px; display: flex; align-items: center; padding: 2px 0 0 9px; color: #222; }
.filterbar a { color: #6a9ac4; margin: 1px 0 0 4px; border-bottom: 1.5px dashed #5a92b8; line-height: 17px; }
.vline { width: 1px; height: 19px; background: #a9cbe0; margin: -3px 9px 0 8px; }
.fbtns { display: flex; margin-left: auto; height: 29px; margin-top: -2px; }
.fb { display: flex; align-items: center; border-left: 1px solid #a9cbe0; height: 29px; padding-top: 2px; }
.fb > svg:first-child { margin: -4px 9px 0 0; }
.add { width: 125px; padding-left: 12px; color: #777; }
.add > svg:first-child { margin-right: 10px; }
.assign { width: 130px; padding-left: 9px; }
.assign > svg:first-child { margin-right: 8px; }
.assign .chev { margin-left: 9px; margin-top: -2px; color: #111; }
.columns { width: 103px; padding-left: 10px; }
.section { display: flex; align-items: center; height: 22px; margin: 22px 17px 0; flex: none; }
.section b { font-weight: 600; color: #111; }
.count { width: 26px; height: 22px; border-radius: 11px; background: #5590bd; color: #fff; text-align: center; line-height: 22px; font-size: 14px; margin-left: 9px; }
.progress { width: 60px; height: 11px; margin: -3px 0 0 11px; border: 2px solid #386788; border-radius: 3px; background: #3cb850; }
.table { margin: 15px 17px 0; border-radius: 3px; overflow: hidden; flex: none; background: #fff; }
.tr { height: 39px; display: flex; align-items: center; border-bottom: 1px solid #cfe0ea; background: #f9f9f9; padding: 1px 0 0 9px; }
.tr.th { height: 38px; background: #f4f8fd; }
.tr:last-child { border: 0; background: #fff; height: 38px; }
.cb { width: 17px; height: 17px; border: 1px solid #b9c6f2; border-radius: 2px; background: #fffff0; margin: -2px 12px 0 0; }
.tr span > span:not(.pill), a.c-title span { margin-top: 1px; }
.c-id { width: 73px; }
.gray { color: #666; }
.c-title { width: 1170px; }
a.c-title { color: #5f96c0; }
.c-as { width: 140px; }
.c-st { width: 116px; }
.go { margin: -2px 0 0 12px; }
.pill { display: flex; align-items: center; width: 89px; height: 24px; border-radius: 12px; background: #338a41; color: #fff; padding-left: 10px; margin-top: -1px; }
.pill .chev { margin-left: 8px; }

.side { width: 292px; background: #d1e2ec; border-left: 1px solid #a9cbe0; color: #222; }
.created { display: flex; flex-direction: column; line-height: 22px; padding: 18px 0 0 15px; height: 101px; border-bottom: 1px solid #a9cbe0; }
.side > a { display: block; height: 34px; line-height: 34px; padding-left: 10px; font-weight: 600; color: #4a7091; font-size: 15px; }
.side > .cur { border-left: 3px solid #386788; color: #111; height: 35px; line-height: 36px; }
.select { margin: 71px 17px 0 15px; height: 32px; background: #fff; border: 1px solid #a9cbe0; border-radius: 2px; display: flex; align-items: center; padding: 3px 0 0 10px; gap: 7.5px; }
.select u { text-decoration: none; color: #5f96c0; border-bottom: 1.500px dashed #5a92b8; line-height: 17px; }
.tree { display: flex; align-items: center; height: 24px; padding-left: 25px; }
.tree .elbow { width: 9px; height: 11px; margin: -12px 4px 0 0; border: 1px dotted #a9bccb; border-top: 0; border-right: 0; }
.tree span { margin-left: 8px; color: #111; }

.bubble { position: absolute; left: 1820.5px; top: 771px; width: 64px; height: 64px; border-radius: 50%; background: linear-gradient(45deg, #3cb850, #0c9473); box-shadow: 0 2px 6px rgba(60, 70, 100, .3); padding: 16px 0 0 18px; }
.bub-count { position: absolute; left: -14px; top: -3px; width: 31px; height: 31px; border-radius: 50%; background: #079372; color: #fff; text-align: center; line-height: 29px; font-size: 15px; }
.scrollbar { width: 25px; background: #f1f1f1; display: flex; flex-direction: column; }
.thumb { height: 702px; margin: 0 2px; background: #c1c1c1; }
.dn { margin-top: auto; }
.watermark { position: absolute; left: 1498px; top: 728px; display: flex; flex-direction: column; font-family: 'Noto Sans', sans-serif; color: rgba(145, 150, 154, .62); }
.wm1 { font-size: 28px; line-height: 38px; }
.wm2 { font-size: 20.5px; line-height: 30px; margin-top: 2px; }

.taskbar { height: 72px; flex: none; border-top: 2px solid #b0b9be; display: flex; align-items: center; position: relative; background: linear-gradient(90deg, #dee5e5 0%, #dce6e8 8%, #dee3eb 14%, #dbe4ea 20%, #d4e9f0 30%, #d8eaf2 60%, #d9ebf2 86%, #dbe5ef 100%); padding-bottom: 2px; color: #16191b; }
.weather { margin-left: 32px; margin-top: 0; }
.wtext { margin-left: 10px; width: 400px; display: flex; flex-direction: column; line-height: 24px; font-size: 16.500px; margin-top: -1px; }
.muted { color: #55595c; }
.tsearch { width: 328px; height: 48px; margin: 0 0 0 20px; border-radius: 24px; background: #f4f9fb; border: 1px solid #c3d2d8; border-bottom: 2px solid #b6c4ca; display: flex; align-items: center; padding-left: 16px; font-size: 18px; color: #5d6265; }
.tsearch span { margin-left: 15px; }
.bing { margin-left: 173px; }
.apps { display: flex; margin-left: 9px; gap: 10px; }
.app { width: 56px; height: 58px; position: relative; display: flex; justify-content: center; padding-top: 12px; border-radius: 5px; }
.app.active { background: #ecf4fa; box-shadow: 0 0 0 1px #cfdfe6; }
.run { position: absolute; bottom: 0; left: 24px; width: 9px; height: 5px; border-radius: 3px; background: #7c8488; }
.active .run { left: 16px; width: 24px; background: #25818e; }
.bdg { position: absolute; color: #fff; text-align: center; }
.bc { left: 31px; top: 4px; width: 24px; height: 24px; border-radius: 50%; background: #0a8577; font-size: 13px; line-height: 24px; }
.bt { left: 31px; top: 11px; width: 23px; height: 17px; border-radius: 6px; background: #f23c36; font-size: 12px; line-height: 17px; letter-spacing: -.5px; }
.bw { left: 21px; top: 4px; width: 40px; height: 24px; border-radius: 7px; background: #25808f; font-size: 16px; line-height: 24px; }
.tray { display: flex; align-items: center; margin-left: auto; padding-right: 30px; }
.wifi { margin-left: 27px; }
.vol { margin-left: 12px; }
.bat { margin-left: 11px; }
.clock { width: 107px; display: flex; flex-direction: column; align-items: flex-end; line-height: 24px; font-size: 17px; margin-top: -1px; }
.notif { width: 24px; height: 24px; border-radius: 50%; background: #25818e; color: #fff; text-align: center; font-size: 14px; line-height: 24px; margin-left: 11px; }
</style>
